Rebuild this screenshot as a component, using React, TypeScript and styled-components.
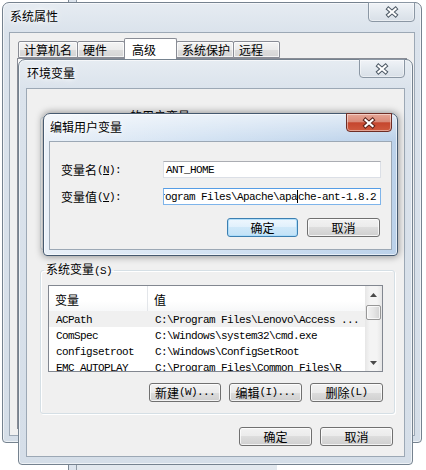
import React from "react";
import styled, { createGlobalStyle } from "styled-components";

const Global = createGlobalStyle`
  html, body { margin: 0; padding: 0; background: #fff; }
  body {
    font-family: "Noto Sans CJK SC", "Liberation Sans", sans-serif;
    font-size: 12px;
    color: #000;
  }
  * { box-sizing: border-box; }
`;

const inactiveBg =
  "linear-gradient(180deg, #e6ecf2 0px, #dbe3ec 28px, #d5dee8 100%)";
const activeBg =
  "linear-gradient(180deg, rgba(255,255,255,0.55) 0px, rgba(255,255,255,0) 26px), linear-gradient(90deg, #e9f0f8 0%, #d4e3f3 45%, #bcd2ea 100%)";

const Desktop = styled.div`
  position: relative;
  width: 426px;
  height: 470px;
  overflow: hidden;
  background: #fff;
`;

const BackWin = styled.div`
  position: absolute;
  left: 68px;
  top: -30px;
  width: 400px;
  height: 520px;
  display: flex;
  padding: 0 0 0 7px;
  border: 1px solid #7d8894;
  background: #dce4ed;
`;

const BackClient = styled.div`
  flex: 1;
  display: flex;
  flex-direction: column;
  justify-content: flex-end;
  background: #fff;
  border-left: 1px solid #8f9aa6;
`;

const BackStrip = styled.div`
  width: 200px;
  height: 26px;
  background: #e2e8ee;
`;

const Win = styled.div<{
  $x: number;
  $y: number;
  $w: number;
  $h: number;
  $side: number;
  $active?: boolean;
}>`
  position: absolute;
  left: ${(p) => p.$x}px;
  top: ${(p) => p.$y}px;
  width: ${(p) => p.$w}px;
  height: ${(p) => p.$h}px;
  display: flex;
  flex-direction: column;
  padding: 0 ${(p) => p.$side}px ${(p) => p.$side}px;
  border: 1px solid ${(p) => (p.$active ? "#45596f" : "#75828f")};
  border-radius: 7px 7px 4px 4px;
  background: ${(p) => (p.$active ? activeBg : inactiveBg)};
  box-shadow: inset 0 0 0 1px rgba(255, 255, 255, 0.6)
    ${(p) => (p.$active ? ", 0 0 7px 1px rgba(0,0,0,0.38)" : "")};
`;

const TitleBar = styled.div<{ $h: number }>`
  height: ${(p) => p.$h}px;
  flex-shrink: 0;
  display: flex;
  align-items: flex-start;
  justify-content: space-between;
`;

const Title = styled.div`
  padding: 5px 0 0 1px;
  font-size: 12px;
  line-height: 16px;
  white-space: nowrap;
  text-shadow: 0 0 8px #fff, 0 0 4px #fff;
`;

const CloseBtn = styled.div<{ $w: number; $h: number; $active?: boolean }>`
  width: ${(p) => p.$w}px;
  height: ${(p) => p.$h}px;
  margin-top: -1px;
  display: flex;
  align-items: center;
  justify-content: center;
  border: 1px solid ${(p) => (p.$active ? "#6e2d25" : "#8b97a4")};
  border-radius: 0 0 4px 4px;
  background: ${(p) =>
    p.$active
      ? "linear-gradient(180deg, #e6a696 0%, #d98a78 45%, #c5462e 52%, #cf5a3e 100%)"
      : "linear-gradient(180deg, #f0f3f7 0%, #e3e9ef 50%, #d8dfe7 100%)"};
  box-shadow: inset 0 0 0 1px rgba(255, 255, 255, 0.45);
`;

const Client = styled.div`
  flex: 1;
  min-height: 0;
  display: flex;
  flex-direction: column;
  border: 1px solid #9ca8b5;
  background: #f0f0f0;
`;

/* ---------- window 1: tabs ---------- */

const TabStrip = styled.div`
  height: 25px;
  flex-shrink: 0;
  display: flex;
  align-items: flex-end;
  padding: 5px 0 0 8px;
`;

const Tab = styled.div<{ $w: number; $selected?: boolean }>`
  position: relative;
  z-index: ${(p) => (p.$selected ? 2 : 1)};
  width: ${(p) => p.$w}px;
  height: ${(p) => (p.$selected ? 21 : 17)}px;
  margin-left: -1px;
  margin-bottom: ${(p) => (p.$selected ? -1 : 0)}px;
  display: flex;
  align-items: center;
  padding-left: ${(p) => (p.$selected ? 7 : 5)}px;
  border: 1px solid #898c95;
  border-bottom: ${(p) => (p.$selected ? "none" : "1px solid #898c95")};
  border-radius: 2px 2px 0 0;
  background: ${(p) =>
    p.$selected
      ? "#fff"
      : "linear-gradient(180deg, #f4f4f4 0%, #ebebeb 50%, #dedede 50%, #d4d4d4 100%)"};
  box-shadow: ${(p) => (p.$selected ? "none" : "inset 0 0 0 1px rgba(255,255,255,.7)")};
  font-size: 12px;
  white-space: nowrap;
  &:first-child {
    margin-left: 0;
  }
`;

const TabPanel = styled.div`
  flex: 1;
  margin: 0 7px 6px 7px;
  border: 1px solid #898c95;
  background: #fcfcfc;
`;

/* ---------- shared bits ---------- */

const Lat = styled.span`
  font-family: "Liberation Mono", monospace;
  font-size: 11px;
  letter-spacing: -0.6px;
`;

const U = styled.span`
  text-decoration: underline;
  text-underline-offset: 1px;
`;

const Mono = styled.span`
  font-family: "Liberation Mono", monospace;
  font-size: 11px;
  letter-spacing: -0.6px;
  white-space: pre;
`;

const Btn = styled.div<{ $w: number; $default?: boolean }>`
  width: ${(p) => p.$w}px;
  height: 19px;
  flex-shrink: 0;
  display: flex;
  align-items: center;
  justify-content: center;
  border: 1px solid ${(p) => (p.$default ? "#3c7fb1" : "#707070")};
  border-radius: 3px;
  background: ${(p) =>
    p.$default
      ? "linear-gradient(180deg, #eef7fe 0%, #e0f0fc 50%, #cfe8f9 50%, #c2e2f7 100%)"
      : "linear-gradient(180deg, #f2f2f2 0%, #ebebeb 50%, #dddddd 50%, #cfcfcf 100%)"};
  box-shadow: inset 0 0 0 1px
    ${(p) => (p.$default ? "rgba(170,220,250,.9)" : "rgba(255,255,255,.75)")};
  font-size: 12px;
  line-height: 1;
  white-space: nowrap;
`;

const ButtonRow = styled.div<{ $mt: number; $pr?: number; $gap: number }>`
  display: flex;
  justify-content: flex-end;
  gap: ${(p) => p.$gap}px;
  margin-top: ${(p) => p.$mt}px;
  padding-right: ${(p) => p.$pr ?? 0}px;
`;

/* ---------- window 2 ---------- */

const EnvBody = styled.div`
  display: flex;
  flex-direction: column;
  padding: 20px 9px 0 13px;
`;

const Group = styled.fieldset<{ $h?: number; $mb?: number }>`
  margin: 0 0 ${(p) => p.$mb ?? 0}px 0;
  min-width: 0;
  ${(p) => (p.$h ? `height: ${p.$h}px;` : "")}
  padding: 7px 11px 11px 7px;
  border: 1px solid #d5dfe5;
  border-radius: 3px;
  box-shadow: inset 1px 1px 0 #fff, 1px 1px 0 #fff;
`;

const Legend = styled.legend`
  margin-left: -4px;
  padding: 0 2px;
  font-size: 12px;
  line-height: 14px;
  white-space: nowrap;
`;

const ListView = styled.div`
  height: 87px;
  display: flex;
  border: 1px solid #828790;
  background: #fff;
`;

const ListMain = styled.div`
  flex: 1;
  min-width: 0;
  display: flex;
  flex-direction: column;
  overflow: hidden;
`;

const ListHeader = styled.div`
  height: 25px;
  flex-shrink: 0;
  display: grid;
  grid-template-columns: 99px 1fr;
  background: linear-gradient(180deg, #fff 0%, #fff 60%, #f7f8f9 100%);
`;

const HeaderCell = styled.div<{ $divider?: boolean }>`
  display: flex;
  align-items: center;
  padding: 2px 0 0 6px;
  border-right: ${(p) => (p.$divider ? "1px solid #e3e6ea" : "none")};
  font-size: 12px;
`;

const Row = styled.div<{ $hot?: boolean }>`
  height: 16px;
  flex-shrink: 0;
  display: grid;
  grid-template-columns: 99px 1fr;
  align-items: center;
  background: ${(p) => (p.$hot ? "#f0f0f0" : "transparent")};
  white-space: nowrap;
`;

const Cell = styled.div`
  padding-left: 7px;
  overflow: hidden;
  line-height: 16px;
`;

const ScrollBar = styled.div`
  width: 17px;
  flex-shrink: 0;
  display: flex;
  flex-direction: column;
  background: linear-gradient(90deg, #e6e6e6 0%, #f4f4f4 30%, #f4f4f4 70%, #e6e6e6 100%);
`;

const ScrollArrow = styled.div`
  height: 17px;
  flex-shrink: 0;
  display: flex;
  align-items: center;
  justify-content: center;
`;

const Thumb = styled.div`
  height: 15px;
  margin: 2px 1px 0;
  border: 1px solid #979797;
  border-radius: 2px;
  background: linear-gradient(90deg, #f3f3f3 0%, #e6e6e6 50%, #d3d3d3 100%);
  box-shadow: inset 0 0 0 1px rgba(255, 255, 255, 0.7);
`;

const Spacer = styled.div`
  flex: 1;
`;

/* ---------- window 3 ---------- */

const Form = styled.div`
  display: grid;
  grid-template-columns: 102px 218px;
  grid-auto-rows: 17px;
  row-gap: 10px;
  padding: 19px 0 0 11px;
`;

const Label = styled.div`
  display: flex;
  align-items: center;
  font-size: 12px;
  white-space: nowrap;
`;

const TextBox = styled.div<{ $focused?: boolean }>`
  display: flex;
  align-items: center;
  padding-left: 2px;
  overflow: hidden;
  white-space: nowrap;
  background: #fff;
  border: 1px solid ${(p) => (p.$focused ? "#7eb4ea" : "#dbdfe6")};
  border-top-color: ${(p) => (p.$focused ? "#569de5" : "#abadb3")};
`;

const ScrollText = styled.span<{ $shift: number }>`
  margin-left: ${(p) => p.$shift}px;
  display: inline-flex;
  align-items: center;
`;

const Caret = styled.span`
  display: inline-block;
  width: 1px;
  height: 13px;
  background: #000;
`;

/* ---------- glyphs ---------- */

const XGlyph = ({ active }: { active?: boolean }) => (
  <svg width="14" height="12" viewBox="0 0 14 12">
    <path
      d="M3.5 3 L10.5 9 M10.5 3 L3.5 9"
      stroke={active ? "#5c2219" : "#4e5a66"}
      strokeWidth="4.2"
      strokeLinecap="square"
      fill="none"
    />
    <path
      d="M3.5 3 L10.5 9 M10.5 3 L3.5 9"
      stroke="#fff"
      strokeWidth="2.2"
      strokeLinecap="square"
      fill="none"
    />
  </svg>
);

const Arrow = ({ down }: { down?: boolean }) => (
  <svg width="7" height="4" viewBox="0 0 7 4">
    <polygon points={down ? "0,0 7,0 3.5,4" : "0,4 7,4 3.5,0"} fill="#4a4a4a" />
  </svg>
);

const rows = [
  { name: "ACPath", value: "C:\\Program Files\\Lenovo\\Access ...", hot: true },
  { name: "ComSpec", value: "C:\\Windows\\system32\\cmd.exe" },
  { name: "configsetroot", value: "C:\\Windows\\ConfigSetRoot" },
  { name: "EMC_AUTOPLAY", value: "C:\\Program Files\\Common Files\\R" },
];

export default function App() {
  return (
    <>
      <Global />
      <Desktop>
        <BackWin>
          <BackClient>
            <BackStrip />
          </BackClient>
        </BackWin>

        {/* 系统属性 */}
        <Win $x={2} $y={2} $w={420} $h={441} $side={6}>
          <TitleBar $h={29}>
            <Title>系统属性</Title>
            <CloseBtn $w={47} $h={20}>
              <XGlyph />
            </CloseBtn>
          </TitleBar>
          <Client>
            <TabStrip>
              <Tab $w={60}>计算机名</Tab>
              <Tab $w={48}>硬件</Tab>
              <Tab $w={53} $selected>
                高级
              </Tab>
              <Tab $w={58}>系统保护</Tab>
              <Tab $w={47}>远程</Tab>
            </TabStrip>
            <TabPanel />
          </Client>
        </Win>

        {/* 环境变量 */}
        <Win $x={18} $y={59} $w={395} $h={406} $side={7}>
          <TitleBar $h={28}>
            <Title>环境变量</Title>
            <CloseBtn $w={46} $h={19}>
              <XGlyph />
            </CloseBtn>
          </TitleBar>
          <Client>
            <EnvBody>
              <Group $h={141} $mb={12}>
                <Legend>
                  <Lat>Administrator </Lat>的用户变量<Lat>(U)</Lat>
                </Legend>
              </Group>
              <Group>
                <Legend>
                  系统变量<Lat>(S)</Lat>
                </Legend>
                <ListView>
                  <ListMain>
                    <ListHeader>
                      <HeaderCell $divider>变量</HeaderCell>
                      <HeaderCell>值</HeaderCell>
                    </ListHeader>
                    {rows.map((r) => (
                      <Row key={r.name} $hot={r.hot}>
                        <Cell>
                          <Mono>{r.name}</Mono>
                        </Cell>
                        <Cell>
                          <Mono>{r.value}</Mono>
                        </Cell>
                      </Row>
                    ))}
                  </ListMain>
                  <ScrollBar>
                    <ScrollArrow>
                      <Arrow />
                    </ScrollArrow>
                    <Thumb />
                    <Spacer />
                    <ScrollArrow>
                      <Arrow down />
                    </ScrollArrow>
                  </ScrollBar>
                </ListView>
                <ButtonRow $mt={11} $gap={8}>
                  <Btn $w={72}>
                    新建<Lat>(W)...</Lat>
                  </Btn>
                  <Btn $w={73}>
                    编辑<Lat>(I)...</Lat>
                  </Btn>
                  <Btn $w={73}>
                    删除<Lat>(L)</Lat>
                  </Btn>
                </ButtonRow>
              </Group>
              <ButtonRow $mt={13} $pr={2} $gap={8}>
                <Btn $w={73}>确定</Btn>
                <Btn $w={73}>取消</Btn>
              </ButtonRow>
            </EnvBody>
          </Client>
        </Win>

        {/* 编辑用户变量 */}
        <Win $x={43} $y={113} $w={355} $h={143} $side={5} $active>
          <TitleBar $h={27}>
            <Title>编辑用户变量</Title>
            <CloseBtn $w={46} $h={19} $active>
              <XGlyph active />
            </CloseBtn>
          </TitleBar>
          <Client>
            <Form>
              <Label>
                变量名
                <Lat>
                  (<U>N</U>):
                </Lat>
              </Label>
              <TextBox>
                <Mono>ANT_HOME</Mono>
              </TextBox>
              <Label>
                变量值
                <Lat>
                  (<U>V</U>):
                </Lat>
              </Label>
              <TextBox $focused>
                <ScrollText $shift={-31}>
                  <Mono>C:\Program Files\Apache\apa</Mono>
                  <Caret />
                  <Mono>che-ant-1.8.2</Mono>
                </ScrollText>
              </TextBox>
            </Form>
            <ButtonRow $mt={13} $pr={11} $gap={9}>
              <Btn $w={71} $default>
                确定
              </Btn>
              <Btn $w={73}>取消</Btn>
            </ButtonRow>
          </Client>
        </Win>
      </Desktop>
    </>
  );
}
